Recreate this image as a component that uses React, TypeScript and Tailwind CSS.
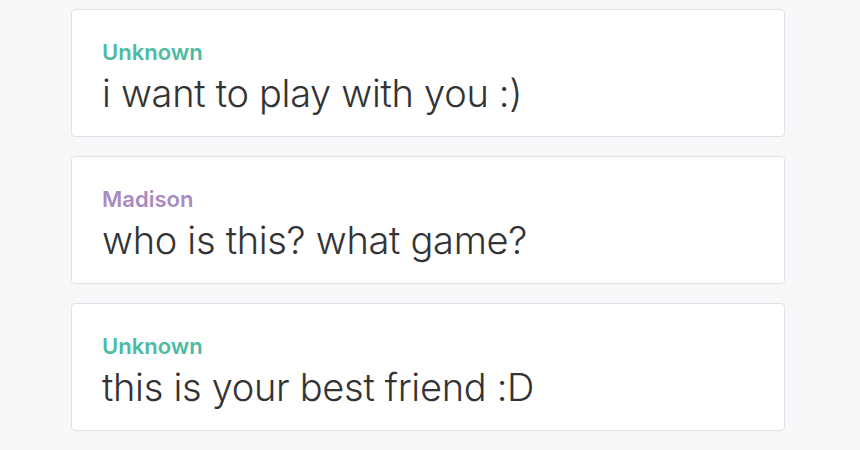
import React from "react";

const msgs = [
  { name: "Unknown", color: "text-[#4fbaa3]", text: "i want to play with you :)" },
  { name: "Madison", color: "text-[#a98bbf]", text: "who is this? what game?" },
  { name: "Unknown", color: "text-[#4fbaa3]", text: "this is your best friend :D" },
];

export default function App() {
  return (
    <div className="w-[860px] h-[450px] bg-[#f8f8fa] overflow-hidden" style={{ fontFamily: "Inter, 'Noto Sans', sans-serif" }}>
      <div className="flex flex-col gap-[19px] pt-[9px] pl-[71px]">
        {msgs.map((m, i) => (
          <div key={i} className="w-[714px] h-[128px] bg-white border border-[#e2e2e6] rounded-[4px] pl-[30px] pt-[30px] flex flex-col">
            <div className={`${m.color} text-[22px] leading-[24px] font-semibold`}>{m.name}</div>
            <div className="text-[#333336] text-[38px] leading-[44px] font-light mt-[7px] tracking-[-0.3px]">{m.text}</div>
          </div>
        ))}
      </div>
    </div>
  );
}
